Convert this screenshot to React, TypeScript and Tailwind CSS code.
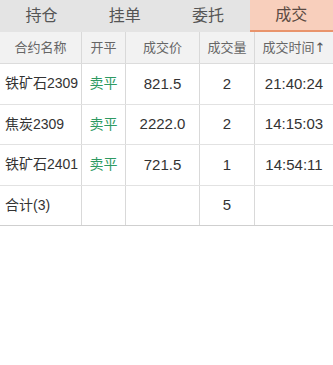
const tabs = ['持仓', '挂单', '委托', '成交'];

const rows = [
  { name: '铁矿石2309', side: '卖平', price: '821.5', vol: '2', time: '21:40:24' },
  { name: '焦炭2309', side: '卖平', price: '2222.0', vol: '2', time: '14:15:03' },
  { name: '铁矿石2401', side: '卖平', price: '721.5', vol: '1', time: '14:54:11' },
];

const cols = 'grid grid-cols-[82px_44px_74px_55px_78px]';
const cell = 'flex items-center border-r border-[#d9d9d9] last:border-r-0';

export default function App() {
  const active = 3;
  return (
    <div
      className="w-[333px] h-[365px] bg-white text-[#333]"
      style={{ fontFamily: '"Liberation Sans", "Noto Sans CJK SC", sans-serif' }}
    >
      <div className="flex h-8 bg-[#e4e4e4]">
        {tabs.map((t, i) => (
          <div
            key={t}
            className={`flex-1 flex items-center justify-center text-[16px] ${
              i === active
                ? 'bg-[#f8cfbc] border-b-2 border-[#e9946c] text-[#5b4a42]'
                : 'text-[#555]'
            }`}
          >
            {t}
          </div>
        ))}
      </div>

      <div className={`${cols} h-8 bg-[#f2f2f2] border-b border-[#dcdcdc] text-[13px] text-[#666]`}>
        <div className={`${cell} justify-center`}>合约名称</div>
        <div className={`${cell} justify-center`}>开平</div>
        <div className={`${cell} justify-center`}>成交价</div>
        <div className={`${cell} justify-center`}>成交量</div>
        <div className={`${cell} justify-center`}>
          成交时间
          <span className="font-['DejaVu_Sans',sans-serif] text-[13px] text-[#555]">↑</span>
        </div>
      </div>

      {rows.map((r) => (
        <div key={r.name + r.time} className={`${cols} h-[40.5px] border-b border-[#e2e2e2]`}>
          <div className={`${cell} pl-[5px] text-[14px]`}>{r.name}</div>
          <div className={`${cell} justify-center text-[14px] text-[#2e9a62]`}>{r.side}</div>
          <div className={`${cell} justify-center text-[15px]`}>{r.price}</div>
          <div className={`${cell} justify-center text-[15px]`}>{r.vol}</div>
          <div className={`${cell} justify-center text-[15px]`}>{r.time}</div>
        </div>
      ))}

      <div className={`${cols} h-10 border-b border-[#cfcfcf]`}>
        <div className={`${cell} pl-[5px] text-[14px]`}>合计(3)</div>
        <div className={cell}></div>
        <div className={cell}></div>
        <div className={`${cell} justify-center text-[15px]`}>5</div>
        <div className={cell}></div>
      </div>
    </div>
  );
}
